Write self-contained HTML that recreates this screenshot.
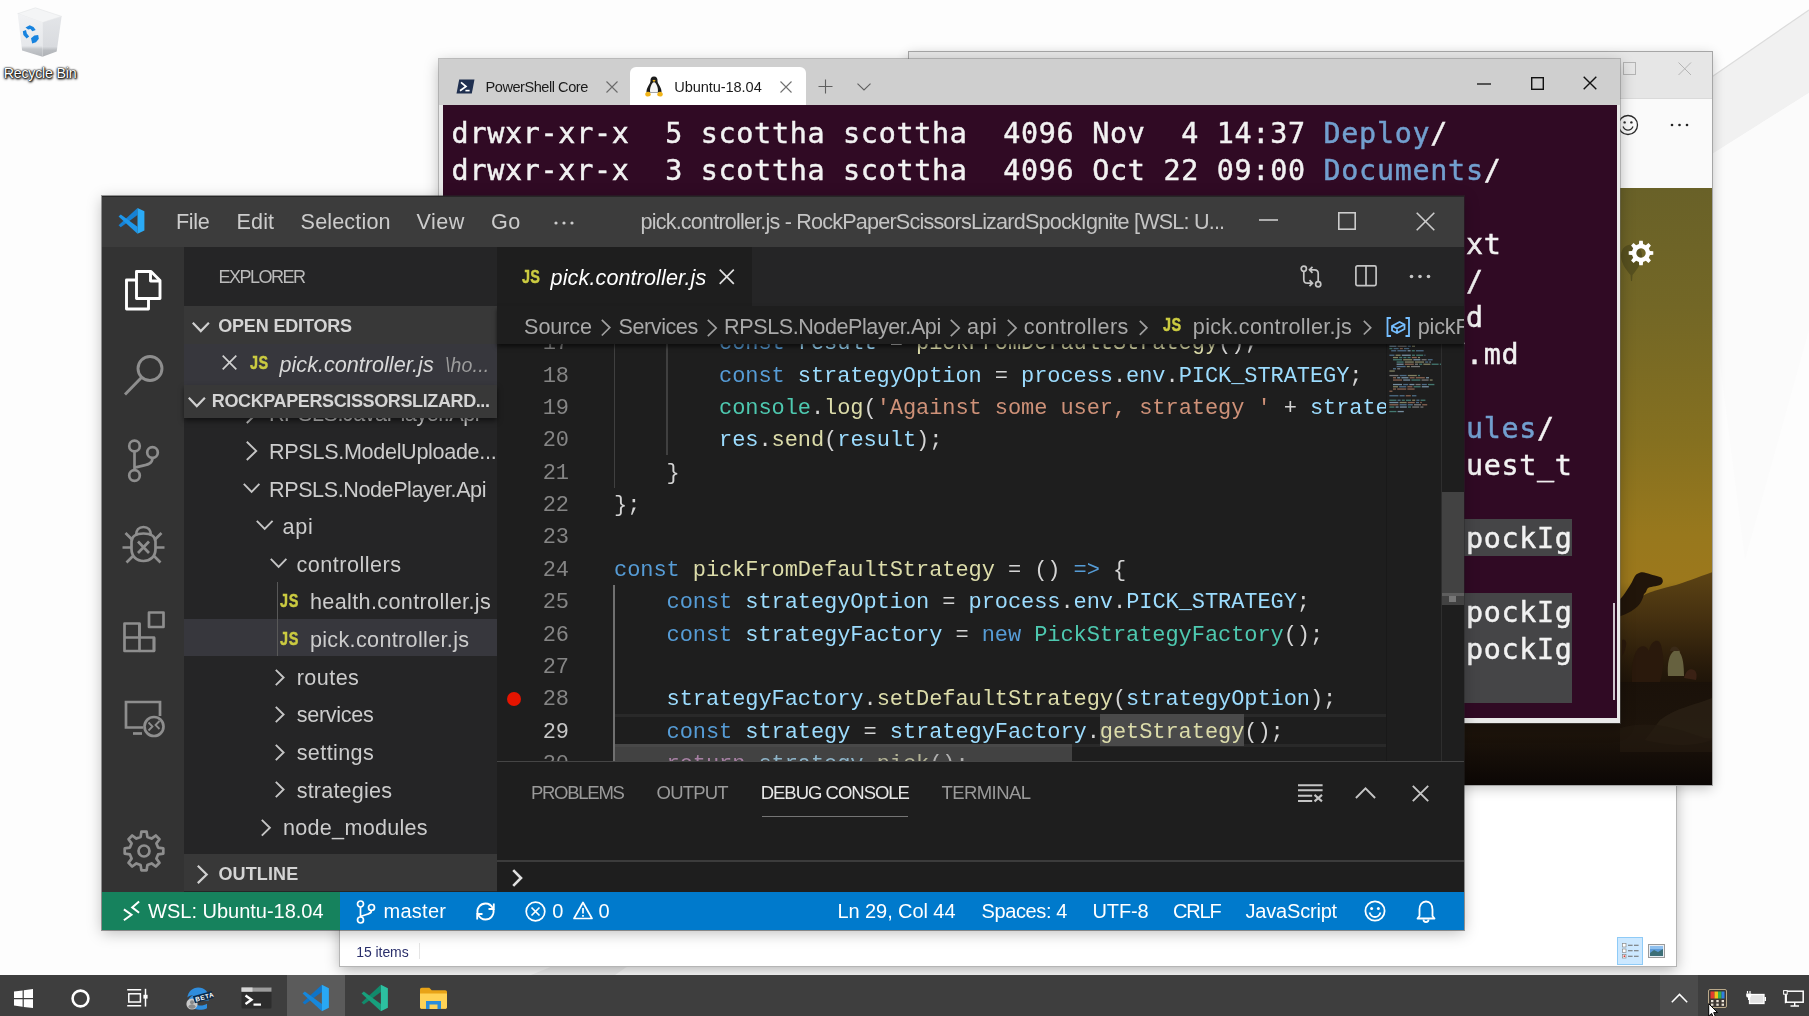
<!DOCTYPE html>
<html lang="en"><head><meta charset="utf-8"><title>Desktop - VS Code WSL</title>
<style>
*{box-sizing:border-box;margin:0;padding:0}
html,body{width:1809px;height:1016px;overflow:hidden;background:#fdfdfd;font-family:"Liberation Sans",sans-serif}
body{position:relative}
.a{position:absolute}
.t{position:absolute;white-space:pre}
svg{position:absolute;overflow:visible}
.win{position:absolute;overflow:hidden;will-change:transform}
.tl{position:absolute;left:9.100000000000023px;white-space:pre;font-family:"DejaVu Sans Mono", "Liberation Mono", monospace;font-size:28.4px;line-height:37px;height:37px;letter-spacing:0.702px;color:#f2f2f2;font-weight:normal;-webkit-text-stroke-width:0.45px}.ln{position:absolute;left:0;width:72px;text-align:right;font-family:"Liberation Mono", monospace;font-size:22px;line-height:32.350px;height:32.350px;color:#858585;letter-spacing:-0.072px}
.ln.cur{color:#c6c6c6}
.cl{position:absolute;left:117px;white-space:pre;font-family:"Liberation Mono", monospace;font-size:22px;line-height:32.350px;height:32.350px;color:#d4d4d4;letter-spacing:-0.072px}
</style></head>
<body>
<svg class="a" style="left:0;top:0" width="1809" height="1016" viewBox="0 0 1809 1016">
<defs><linearGradient id="wg" x1="0" y1="0" x2="1" y2="0"><stop offset="0" stop-color="#f3f3f3"/><stop offset="1" stop-color="#ececec"/></linearGradient></defs>
<polygon points="1700,85 1809,10 1809,93 1700,162" fill="#f1f1f1"/>
<polyline points="1700,85 1809,10" stroke="#dcdcdc" stroke-width="1.2" fill="none"/>
<polygon points="1809,93 1809,330 1745,560 1712,300 1712,154" fill="#fbfbfb"/>
<polygon points="531,975 553,966 628,966 615,975" fill="#f1f1f1"/>
</svg>
<svg class="a" style="left:0;top:0" width="80" height="64" viewBox="0 0 80 64">
<defs><linearGradient id="rbl" x1="0" y1="0" x2="0" y2="1"><stop offset="0" stop-color="#f1f2f4"/><stop offset="0.75" stop-color="#e6e8eb"/><stop offset="0.82" stop-color="#c3c6ca"/><stop offset="1" stop-color="#b4b7bb"/></linearGradient>
<linearGradient id="rbr" x1="0" y1="0" x2="0" y2="1"><stop offset="0" stop-color="#e3e5e8"/><stop offset="0.75" stop-color="#d9dbdf"/><stop offset="0.84" stop-color="#b9bcc0"/><stop offset="1" stop-color="#aeb1b5"/></linearGradient></defs>
<polygon points="17.700,13.700 35.400,7.800 61.600,16.400 42.500,22.600" fill="#f4f5f6" stroke="#e3e4e6" stroke-width="0.600"/>
<polygon points="17.700,13.700 42.500,22.600 42.500,56.700 22.100,50.500" fill="url(#rbl)"/>
<polygon points="42.500,22.600 61.600,16.400 56.700,51.400 42.500,56.700" fill="url(#rbr)"/>
<g fill="#1783df"><path d="M25.500 27.500l4.200-2.200l3.800 1.600l2.200 3.200l-3.400 1.200l-1.800-2.400l-2.400 0.600z"/><path d="M22.800 31.200l3.200-1.200l0.800 3.400l2.400 3.200l-2.600 2l-3.200-3.600z"/><path d="M31 38.200l3.400-2.600l3.800-0.600l0.600 3.800l-2.800 3.400l-3.800 1.200z"/></g>
</svg>
<span class="t" style="left:3.7px;top:64.4px;font-size:14.2px;line-height:18px;color:#fff;letter-spacing:-0.20px;text-shadow:0 0 2px #000,1px 1px 2px #000,0 1px 3px #000,0 0 1px #000;">Recycle Bin</span><div class="win" style="left:340px;top:300px;width:1336px;height:666px;background:#fff;box-shadow:0 0 0 1px #b5b5b5,0 4px 14px rgba(0,0,0,.3)">
<span class="t" style="left:16.3px;top:642.5px;font-size:14px;line-height:18px;color:#2a2f6b;letter-spacing:-0.07px;">15 items</span>
<div class="a" style="left:79px;top:643px;width:1px;height:16px;background:#e5e5e5"></div>
<div class="a" style="left:1277px;top:637px;width:26px;height:28px;background:#cce8ff;border:1px solid #8fcbf7"></div>
<svg style="left:1282px;top:643px" width="18" height="16" viewBox="0 0 18 16"><g fill="#fff" stroke="#8a8a8a" stroke-width="0.7"><rect x="0.5" y="0.5" width="3.5" height="3.5"/><rect x="0.5" y="6" width="3.5" height="3.5"/><rect x="0.5" y="11.5" width="3.5" height="3.5"/></g><rect x="1.6" y="12.4" width="1.6" height="1.6" fill="#d33"/><g stroke="#6b6b6b" stroke-width="1.1"><path d="M6 2.2h4.6M12 2.2h4.6M6 7.7h4.6M12 7.7h4.6M6 13.2h4.6M12 13.2h4.6"/></g></svg>
<svg style="left:1308px;top:644px" width="17" height="14" viewBox="0 0 17 14"><rect x="0.5" y="0.5" width="16" height="13" fill="#e9eef5" stroke="#9a9a9a"/><rect x="2" y="2" width="13" height="10" fill="#5d9bd8"/><path d="M2 9 l4-3 l4 2 l5-3 v7 h-13z" fill="#3d6f77"/><rect x="2" y="2" width="13" height="3" fill="#8fc0ee"/></svg>
</div><div class="win" style="left:909px;top:52px;width:803px;height:733px;background:#fafafa;box-shadow:0 0 0 1px #a6a6a6,0 3px 12px rgba(0,0,0,.24)">
<div class="a" style="left:0;top:0;width:804px;height:47px;background:#e6e6e6;border-bottom:1px solid #dadada"></div>
<svg style="left:714px;top:10px" width="14" height="14" viewBox="0 0 14 14"><rect x="0.5" y="0.5" width="12" height="12" fill="none" stroke="#b4b4b4" stroke-width="1"/></svg>
<svg style="left:769px;top:10px" width="14" height="14" viewBox="0 0 14 14"><path d="M0.5 0.5L13 13M13 0.5L0.5 13" stroke="#b4b4b4" stroke-width="1" fill="none"/></svg>
<svg style="left:707.500px;top:61.500px" width="22" height="22" viewBox="0 0 22 22"><circle cx="11" cy="11" r="9.5" fill="none" stroke="#2b2b2b" stroke-width="1.3"/><circle cx="7.6" cy="8.4" r="1.2" fill="#2b2b2b"/><circle cx="14.4" cy="8.4" r="1.2" fill="#2b2b2b"/><path d="M6 12.6c1.2 2.6 3 3.6 5 3.6s3.8-1 5-3.6" fill="none" stroke="#2b2b2b" stroke-width="1.3"/></svg>
<svg style="left:760.500px;top:69.500px" width="20" height="6" viewBox="0 0 20 6"><circle cx="2" cy="3" r="1.3" fill="#222"/><circle cx="9.5" cy="3" r="1.3" fill="#222"/><circle cx="17" cy="3" r="1.3" fill="#222"/></svg>
<svg style="left:0px;top:136px" width="804" height="597" viewBox="909 188 804 597" preserveAspectRatio="none">
<defs>
<linearGradient id="sky" gradientUnits="userSpaceOnUse" x1="0" y1="188" x2="0" y2="785">
<stop offset="0" stop-color="#696128"/><stop offset="0.2" stop-color="#736726"/><stop offset="0.42" stop-color="#857020"/><stop offset="0.58" stop-color="#98781d"/><stop offset="0.66" stop-color="#9c781c"/><stop offset="0.72" stop-color="#6a4e15"/><stop offset="1" stop-color="#0e0805"/></linearGradient>
<linearGradient id="hill" gradientUnits="userSpaceOnUse" x1="0" y1="572" x2="0" y2="700"><stop offset="0" stop-color="#5c4314"/><stop offset="0.35" stop-color="#463110"/><stop offset="0.7" stop-color="#2a1c0b"/><stop offset="1" stop-color="#150e07"/></linearGradient>
<linearGradient id="gnd" gradientUnits="userSpaceOnUse" x1="0" y1="680" x2="0" y2="785"><stop offset="0" stop-color="#1a1109"/><stop offset="0.5" stop-color="#1d140b"/><stop offset="1" stop-color="#0c0705"/></linearGradient>
</defs>
<rect x="909" y="188" width="804" height="597" fill="url(#sky)"/>
<path d="M1615 612 L1646 594 C1655 590 1668 587 1676 585 S1698 577 1713 572 V700 H1615Z" fill="url(#hill)"/>
<rect x="1400" y="682" width="314" height="103" fill="url(#gnd)"/>
<path d="M1615 618 V603 C1621 600 1626 592 1632 582 C1634 577 1636 574 1638 573.500 C1641 571.500 1644 572 1646 573 C1650 574 1656 576 1660 577 C1663 578 1664 582 1661 584.500 C1658 586.500 1652 586 1648 588 C1646 590 1647 592 1644 594 C1643 598 1641 603 1638 606 C1633 611 1625 615 1615 618Z" fill="#21150a"/>
<path d="M1632 682 C1631 666 1634 650 1640 647 C1644 645 1647 647 1649 651 C1650 644 1654 640 1658 641 C1661 642 1662 648 1663 656 C1664 666 1662 676 1660 682Z" fill="#2a190c"/>
<path d="M1622 640 c3 -2 5 2 4 6 c-1 4 -2 8 -4 10z" fill="#2a190c"/>
<path d="M1668 676 C1667 664 1669 654 1674 651 C1676 648 1680 649 1680 653 C1683 657 1684 666 1684 676Z" fill="#66613f"/>
<path d="M1670 651 a4 4 0 1 1 9 0z" fill="#3a2a18"/>
<path d="M1684 678 c2 -8 6 -10 10 -8 c3 2 3 6 2 10z" fill="#3a2114"/>
<path d="M1660 720 C1675 708 1695 705 1712 698 V740 C1690 748 1665 745 1645 740 Z" fill="#2a2014" opacity="0.8"/>
<path d="M1620 728 C1640 722 1660 724 1680 730 S1705 740 1712 738 V752 H1620Z" fill="#241a10" opacity="0.7"/>
<path d="M1630.500 275 c-5 -6 -10 -13 -9.500 -20 c0.500 -7 5 -10.500 10.500 -10.500 s10 3.500 10.500 10.500 c0.500 7 -4.500 14 -9.500 20 l-0.500 6 h-1z" fill="#57501f"/>
</svg>
<svg style="left:719.3px;top:187.7px" width="26" height="26" viewBox="0 0 26 26"><path fill-rule="evenodd" fill="#fff" d="M10.92 4.04L11.25 0.72L14.75 0.72L15.08 4.04L17.87 5.19L20.45 3.08L22.92 5.55L20.81 8.13L21.96 10.92L25.28 11.25L25.28 14.75L21.96 15.08L20.81 17.87L22.92 20.45L20.45 22.92L17.87 20.81L15.08 21.96L14.75 25.28L11.25 25.28L10.92 21.96L8.13 20.81L5.55 22.92L3.08 20.45L5.19 17.87L4.04 15.08L0.72 14.75L0.72 11.25L4.04 10.92L5.19 8.13L3.08 5.55L5.55 3.08L8.13 5.19Z M13 8.300a4.700 4.700 0 1 0 0.010 0z"/></svg>
</div><div class="win" style="left:439px;top:59px;width:1181px;height:663.5px;background:#cfcfcf;box-shadow:0 0 0 1px rgba(110,110,110,.4),0 4px 14px rgba(0,0,0,.28)">
<div class="a" style="left:0;top:46px;width:1181px;height:617.5px;background:#e9e9e9"></div>
<div class="a" style="left:191px;top:8px;width:176px;height:40px;background:#fff;border-radius:6px 6px 0 0"></div>
<svg style="left:17px;top:20px" width="19" height="15" viewBox="0 0 19 15"><path d="M3.2 0.5H18.5L15.8 14.5H0.5Z" fill="#1f2f4f"/><path d="M5 3.4l5 4.1l-6 4.2" fill="none" stroke="#fff" stroke-width="1.7"/><path d="M9.4 11.6h4.2" stroke="#fff" stroke-width="1.6"/></svg>
<span class="t" style="left:46.5px;top:19.1px;font-size:14.6px;line-height:19px;color:#1b1b1b;letter-spacing:-0.48px;">PowerShell Core</span>
<svg style="left:167px;top:22px" width="12" height="12" viewBox="0 0 12 12"><path d="M0.5 0.5L11.5 11.5M11.5 0.5L0.5 11.5" stroke="#6a6a6a" stroke-width="1.1" fill="none"/></svg>
<svg style="left:205px;top:17px" width="20" height="21" viewBox="0 0 20 21">
<path d="M10 0.6c-2.6 0-3.6 2-3.5 4.2c0.1 1.9-1 3-2.2 5.2c-1.3 2.4-2 4.4-1.8 6.6h15c0.2-2.2-0.5-4.2-1.8-6.6c-1.2-2.2-2.3-3.3-2.2-5.2c0.1-2.2-0.9-4.2-3.5-4.2z" fill="#1c1c1c"/>
<path d="M10 6.2c-1.6 0-2.3 1.8-3 3.6c-0.8 2-1.3 4.2-0.8 6.4h7.6c0.5-2.2 0-4.4-0.8-6.4c-0.7-1.8-1.4-3.6-3-3.6z" fill="#f4f4f4"/>
<path d="M8.3 4.6l1.7-0.8l1.7 0.8l-1.7 1.5z" fill="#f1b418"/>
<path d="M1.2 18.2c0-1.4 1.4-2.6 3-2.4c1.3 0.2 2.6 1.4 2.6 2.8c0 1.2-1.2 1.9-2.8 1.9s-2.8-0.9-2.8-2.3z" fill="#f1b418"/>
<path d="M18.8 18.2c0-1.4-1.4-2.6-3-2.4c-1.3 0.2-2.6 1.4-2.6 2.8c0 1.2 1.2 1.9 2.8 1.9s2.8-0.9 2.8-2.3z" fill="#f1b418"/>
</svg>
<span class="t" style="left:235.2px;top:19.1px;font-size:14.6px;line-height:19px;color:#1b1b1b;letter-spacing:-0.08px;">Ubuntu-18.04</span>
<svg style="left:341px;top:22px" width="12" height="12" viewBox="0 0 12 12"><path d="M0.5 0.5L11.5 11.5M11.5 0.5L0.5 11.5" stroke="#707070" stroke-width="1.1" fill="none"/></svg>
<svg style="left:379px;top:20px" width="15" height="15" viewBox="0 0 15 15"><path d="M7.5 0.5V14.5M0.5 7.5H14.5" stroke="#5f5f5f" stroke-width="1.1" fill="none"/></svg>
<svg style="left:418px;top:24px" width="14" height="8" viewBox="0 0 14 8"><path d="M0.5 0.7L7 7L13.5 0.7" stroke="#5f5f5f" stroke-width="1.1" fill="none"/></svg>
<svg style="left:1038px;top:24px" width="14" height="2" viewBox="0 0 14 2"><path d="M0 1H14" stroke="#111" stroke-width="1.3"/></svg>
<svg style="left:1092px;top:18px" width="13" height="13" viewBox="0 0 13 13"><rect x="0.7" y="0.7" width="11.6" height="11.6" fill="none" stroke="#111" stroke-width="1.4"/></svg>
<svg style="left:1144px;top:17px" width="14" height="14" viewBox="0 0 14 14"><path d="M0.7 0.7L13.3 13.3M13.3 0.7L0.7 13.3" stroke="#111" stroke-width="1.4" fill="none"/></svg>
<div class="a" style="left:3.5px;top:46px;width:1174px;height:612.5px;background:#300a24;overflow:hidden">
<div class="a" style="left:8.5px;top:414.0px;width:1121.4px;height:36.80000000000001px;background:#454547"></div>
<div class="a" style="left:8.5px;top:487.6px;width:1121.4px;height:110.39999999999998px;background:#454547"></div>
<div class="tl" style="top:10.400000000000006px">drwxr-xr-x  5 scottha scottha  4096 Nov  4 14:37 <span style="color:#729fcf">Deploy</span>/</div>
<div class="tl" style="top:47.19999999999999px">drwxr-xr-x  3 scottha scottha  4096 Oct 22 09:00 <span style="color:#729fcf">Documents</span>/</div>
<div class="tl" style="top:84.0px"></div>
<div class="tl" style="top:120.80000000000001px">-rw-r--r--  1 scottha scottha   123 Oct 22 09:00 NOTICE.txt</div>
<div class="tl" style="top:157.60000000000002px">drwxr-xr-x  4 scottha scottha  4096 Oct 22 09:00 <span style="color:#729fcf">Pipeline</span>/</div>
<div class="tl" style="top:194.39999999999998px">-rw-r--r--  1 scottha scottha  8211 Nov  4 14:37 README.md</div>
<div class="tl" style="top:231.2px">-rw-r--r--  1 scottha scottha  2757 Oct 22 09:00 SECURITY.md</div>
<div class="tl" style="top:268.0px">drwxr-xr-x  9 scottha scottha  4096 Nov  4 14:37 <span style="color:#729fcf">Source</span>/</div>
<div class="tl" style="top:304.79999999999995px">drwxr-xr-x 98 scottha scottha  4096 Oct 22 09:01 <span style="color:#729fcf">node_modules</span>/</div>
<div class="tl" style="top:341.6px">-rw-r--r--  1 scottha scottha   412 Oct 22 09:00 pull_request_t</div>
<div class="tl" style="top:378.4px">emplate.md</div>
<div class="tl" style="top:415.19999999999993px">scottha@IGNITE:/mnt/d/github/rps/RockPaperScissorsLizardSpockIg</div>
<div class="tl" style="top:452.0px">nite$ code .</div>
<div class="tl" style="top:488.79999999999995px">scottha@IGNITE:/mnt/d/github/rps/RockPaperScissorsLizardSpockIg</div>
<div class="tl" style="top:525.5999999999999px">scottha@IGNITE:/mnt/d/github/rps/RockPaperScissorsLizardSpockIg</div>
<div class="tl" style="top:562.4px">nite$ </div>
<div class="a" style="left:1170.5px;top:498px;width:1.700px;height:97px;background:#cfc6cd"></div>
</div>
</div><div class="win" style="left:102px;top:196px;width:1361.5px;height:734.3px;background:#1e1e1e;box-shadow:0 0 0 1px rgba(40,40,40,.45),0 3px 14px rgba(0,0,0,.26)">
<div class="a" style="left:0.0px;top:0.0px;width:1361.5px;height:51.0px;background:#3c3c3c;border-top:1.500px solid #262626;"></div>
<svg style="left:15.9px;top:11.3px;" width="27.5" height="27.8" viewBox="0 0 100 100"><path d="M71 3L71 29L10 73L2 66Z" fill="#1681d4"/><path d="M71 97L71 71L10 27L2 34Z" fill="#1e97ea"/><path d="M71 3L96 15V85L71 97Z" fill="#2aaaf6"/></svg>
<span class="t" style="left:73.9px;top:12.4px;font-size:21.6px;line-height:28px;color:#cccccc;letter-spacing:-0.28px;">File</span>
<span class="t" style="left:134.5px;top:12.4px;font-size:21.6px;line-height:28px;color:#cccccc;letter-spacing:0.11px;">Edit</span>
<span class="t" style="left:198.6px;top:12.4px;font-size:21.6px;line-height:28px;color:#cccccc;letter-spacing:0.14px;">Selection</span>
<span class="t" style="left:314.6px;top:12.4px;font-size:21.6px;line-height:28px;color:#cccccc;letter-spacing:0.46px;">View</span>
<span class="t" style="left:388.9px;top:12.4px;font-size:21.6px;line-height:28px;color:#cccccc;letter-spacing:0.47px;">Go</span>
<svg style="left:452.0px;top:24.5px;" width="20" height="4" viewBox="0 0 20 4"><circle cx="2" cy="2" r="1.600" fill="#ccc"/><circle cx="10" cy="2" r="1.600" fill="#ccc"/><circle cx="18" cy="2" r="1.600" fill="#ccc"/></svg>
<span class="t" style="left:538.5px;top:12.4px;font-size:21.6px;line-height:28px;color:#c4c4c4;letter-spacing:-0.81px;">pick.controller.js - RockPaperScissorsLizardSpockIgnite [WSL: U...</span>
<svg style="left:1157.0px;top:22.5px;" width="19" height="2" viewBox="0 0 19 2"><path d="M0 1H19" stroke="#ccc" stroke-width="1.600"/></svg>
<svg style="left:1236.0px;top:16.0px;" width="18" height="18" viewBox="0 0 18 18"><rect x="0.800" y="0.800" width="16.400" height="16.400" fill="none" stroke="#ccc" stroke-width="1.600"/></svg>
<svg style="left:1314.0px;top:15.5px;" width="19" height="19" viewBox="0 0 19 19"><path d="M0.700 0.700L18.300 18.300M18.300 0.700L0.700 18.300" stroke="#ccc" stroke-width="1.600" fill="none"/></svg>
<div class="a" style="left:0.0px;top:51.0px;width:82.0px;height:644.5px;background:#333333;"></div>
<svg style="left:21.0px;top:72.0px;" width="40" height="44" viewBox="0 0 40 44"><g fill="none" stroke="#ffffff" stroke-width="2.900" stroke-linejoin="round"><path d="M13.500 30.500V3.500H28L37 12.500V30.500Z"/><path d="M27.500 3.500V13H37"/><path d="M13 12H3.500V41H25.500V31"/></g></svg>
<svg style="left:21.0px;top:157.0px;" width="42" height="44" viewBox="0 0 42 44"><g fill="none" stroke="#8e8e8e" stroke-width="2.900"><circle cx="27" cy="15.500" r="12"/><path d="M18.500 24.500L2 41.500"/></g></svg>
<svg style="left:23.0px;top:242.0px;" width="36" height="46" viewBox="0 0 36 46"><g fill="none" stroke="#8e8e8e" stroke-width="2.700"><circle cx="9.500" cy="8" r="5.300"/><circle cx="9.500" cy="37.500" r="5.300"/><circle cx="27.500" cy="14.500" r="5.300"/><path d="M9.500 13.500V32"/><path d="M27.500 20C27.500 27 20 27 9.500 29.500"/></g></svg>
<svg style="left:20.0px;top:328.0px;" width="44" height="44" viewBox="0 0 44 44"><g fill="none" stroke="#8e8e8e" stroke-width="2.700"><path d="M9.500 17.500C9.500 12.500 14 9.500 21.500 9.500S33.500 12.500 33.500 17.500V25C33.500 32.500 28.500 37 21.500 37S9.500 32.500 9.500 25Z"/><path d="M14 11.500C14 6 17 3 21.500 3S29 6 29 11.500"/><path d="M16 17.500L27 29M27 17.500L16 29"/><path d="M10 15.500L3.500 9M33 15.500L39.500 9M9 23.500H0.500M34 23.500H42.500M11.500 31.500L4.500 38.500M31.500 31.500L38.500 38.500"/></g></svg>
<svg style="left:20.0px;top:414.0px;" width="44" height="44" viewBox="0 0 44 44"><g fill="none" stroke="#8e8e8e" stroke-width="2.700" stroke-linejoin="round"><path d="M2.500 13.500H17.500V41H2.500Z"/><path d="M2.500 27.500H32V41H17.500"/><path d="M17.500 13.500V27.500M32 27.500V41"/><rect x="27" y="2.500" width="14.500" height="14.500"/></g></svg>
<svg style="left:21.0px;top:503.0px;" width="44" height="40" viewBox="0 0 44 40"><g fill="none" stroke="#8e8e8e" stroke-width="2.700"><path d="M20 28.500H3V3H37V17"/><path d="M10 34.500H19"/><circle cx="31" cy="27.500" r="9.500"/></g><g fill="none" stroke="#8e8e8e" stroke-width="1.800"><path d="M25.500 23.500L29.500 27.500L25.500 31.500"/><path d="M36.500 23.500L32.500 27.500L36.500 31.500" transform="translate(0 -1.500)"/></g></svg>
<svg style="left:20.5px;top:633.5px;" width="42" height="42" viewBox="0 0 42 42"><g fill="none" stroke="#8e8e8e" stroke-width="2.700" stroke-linejoin="round"><path d="M17.6 6.9L18.4 1.7L23.6 1.7L24.4 6.9L28.6 8.6L32.8 5.5L36.5 9.2L33.4 13.4L35.1 17.6L40.3 18.4L40.3 23.6L35.1 24.4L33.4 28.6L36.5 32.8L32.8 36.5L28.6 33.4L24.4 35.1L23.6 40.3L18.4 40.3L17.6 35.1L13.4 33.4L9.2 36.5L5.5 32.8L8.6 28.6L6.9 24.4L1.7 23.6L1.7 18.4L6.9 17.6L8.6 13.4L5.5 9.2L9.2 5.5L13.4 8.6Z"/><circle cx="21" cy="21" r="5.500"/></g></svg>
<div class="a" style="left:82.0px;top:51.0px;width:313.0px;height:644.5px;background:#252526;"></div>
<span class="t" style="left:116.5px;top:70.0px;font-size:18px;line-height:23px;color:#bbbbbb;letter-spacing:-1.51px;">EXPLORER</span>
<span class="t" style="left:167.0px;top:203.6px;font-size:21.6px;line-height:28px;color:#cccccc;letter-spacing:-0.48px;">RPSLS.JavaPlayer.Api</span>
<svg style="left:144.3px;top:207.7px;" width="11.0" height="19.8" viewBox="0 0 11.0 19.8"><path d="M0.800 0.800L10.2 9.9L0.800 19.0" fill="none" stroke="#c5c5c5" stroke-width="1.9"/></svg>
<div class="a" style="left:82.0px;top:422.7px;width:313.0px;height:37.6px;background:#37373d;"></div>
<div class="a" style="left:175.0px;top:385.6px;width:1.4px;height:74.7px;background:#585858;"></div>
<svg style="left:144.3px;top:245.3px;" width="11.0" height="19.8" viewBox="0 0 11.0 19.8"><path d="M0.800 0.800L10.2 9.9L0.800 19.0" fill="none" stroke="#c5c5c5" stroke-width="1.9"/></svg>
<span class="t" style="left:167.0px;top:241.9px;font-size:21.6px;line-height:28px;color:#cccccc;letter-spacing:-0.32px;">RPSLS.ModelUploade...</span>
<svg style="left:140.7px;top:286.5px;" width="17.2" height="9.6" viewBox="0 0 17.2 9.6"><path d="M0.800 0.800L8.6 8.8L16.4 0.800" fill="none" stroke="#c5c5c5" stroke-width="1.9"/></svg>
<span class="t" style="left:167.0px;top:279.5px;font-size:21.6px;line-height:28px;color:#cccccc;letter-spacing:-0.43px;">RPSLS.NodePlayer.Api</span>
<svg style="left:154.0px;top:324.1px;" width="17.4" height="9.7" viewBox="0 0 17.4 9.7"><path d="M0.800 0.800L8.7 8.9L16.6 0.800" fill="none" stroke="#c5c5c5" stroke-width="1.9"/></svg>
<span class="t" style="left:180.6px;top:317.1px;font-size:21.6px;line-height:28px;color:#cccccc;letter-spacing:0.64px;">api</span>
<svg style="left:168.1px;top:361.7px;" width="17.2" height="9.6" viewBox="0 0 17.2 9.6"><path d="M0.800 0.800L8.6 8.8L16.4 0.800" fill="none" stroke="#c5c5c5" stroke-width="1.9"/></svg>
<span class="t" style="left:194.4px;top:354.8px;font-size:21.6px;line-height:28px;color:#cccccc;letter-spacing:0.51px;">controllers</span>
<span class="t" style="left:178.2px;top:393.9px;font-size:18px;line-height:23px;color:#cbcb41;letter-spacing:0.95px;font-weight:bold;transform-origin:0 50%;transform:scaleX(0.8);-webkit-text-stroke:0.450px #cbcb41;">JS</span>
<span class="t" style="left:207.9px;top:392.4px;font-size:21.6px;line-height:28px;color:#cccccc;letter-spacing:0.36px;">health.controller.js</span>
<span class="t" style="left:178.2px;top:431.5px;font-size:18px;line-height:23px;color:#cbcb41;letter-spacing:0.95px;font-weight:bold;transform-origin:0 50%;transform:scaleX(0.8);-webkit-text-stroke:0.450px #cbcb41;">JS</span>
<span class="t" style="left:207.9px;top:430.0px;font-size:21.6px;line-height:28px;color:#cccccc;letter-spacing:0.33px;">pick.controller.js</span>
<svg style="left:172.7px;top:472.5px;" width="9.4" height="16.9" viewBox="0 0 9.4 16.9"><path d="M0.800 0.800L8.6 8.5L0.800 16.1" fill="none" stroke="#c5c5c5" stroke-width="1.9"/></svg>
<span class="t" style="left:194.7px;top:467.6px;font-size:21.6px;line-height:28px;color:#cccccc;letter-spacing:0.44px;">routes</span>
<svg style="left:172.7px;top:510.1px;" width="9.4" height="16.9" viewBox="0 0 9.4 16.9"><path d="M0.800 0.800L8.6 8.5L0.800 16.1" fill="none" stroke="#c5c5c5" stroke-width="1.9"/></svg>
<span class="t" style="left:194.7px;top:505.2px;font-size:21.6px;line-height:28px;color:#cccccc;letter-spacing:-0.29px;">services</span>
<svg style="left:172.7px;top:547.7px;" width="9.4" height="16.9" viewBox="0 0 9.4 16.9"><path d="M0.800 0.800L8.6 8.5L0.800 16.1" fill="none" stroke="#c5c5c5" stroke-width="1.9"/></svg>
<span class="t" style="left:194.7px;top:542.9px;font-size:21.6px;line-height:28px;color:#cccccc;letter-spacing:0.38px;">settings</span>
<svg style="left:172.7px;top:585.3px;" width="9.4" height="16.9" viewBox="0 0 9.4 16.9"><path d="M0.800 0.800L8.6 8.5L0.800 16.1" fill="none" stroke="#c5c5c5" stroke-width="1.9"/></svg>
<span class="t" style="left:194.7px;top:580.5px;font-size:21.6px;line-height:28px;color:#cccccc;letter-spacing:0.18px;">strategies</span>
<svg style="left:158.7px;top:622.7px;" width="9.7" height="17.5" viewBox="0 0 9.7 17.5"><path d="M0.800 0.800L8.9 8.7L0.800 16.7" fill="none" stroke="#c5c5c5" stroke-width="1.9"/></svg>
<span class="t" style="left:181.0px;top:618.1px;font-size:21.6px;line-height:28px;color:#cccccc;letter-spacing:0.27px;">node_modules</span>
<span class="t" style="left:159.2px;top:659.0px;font-size:17px;line-height:22px;color:#cbcb41;letter-spacing:1.24px;font-weight:bold;">{ }</span>
<div class="a" style="left:82.0px;top:110.3px;width:313.0px;height:38.1px;background:#383838;"></div>
<svg style="left:90.0px;top:125.5px;" width="17.7" height="9.9" viewBox="0 0 17.7 9.9"><path d="M0.800 0.800L8.8 9.1L16.9 0.800" fill="none" stroke="#d0d0d0" stroke-width="2.2"/></svg>
<span class="t" style="left:116.2px;top:118.7px;font-size:18px;line-height:23px;color:#d4d4d4;letter-spacing:-0.16px;font-weight:bold;">OPEN EDITORS</span>
<div class="a" style="left:82.0px;top:148.4px;width:313.0px;height:40.6px;background:#37373d;"></div>
<svg style="left:119.7px;top:159.0px;" width="15" height="15" viewBox="0 0 15 15"><path d="M0.700 0.700L14.300 14.300M14.300 0.700L0.700 14.300" stroke="#d0d0d0" stroke-width="1.700" fill="none"/></svg>
<span class="t" style="left:147.5px;top:155.5px;font-size:18px;line-height:23px;color:#cbcb41;letter-spacing:0.76px;font-weight:bold;transform-origin:0 50%;transform:scaleX(0.8);-webkit-text-stroke:0.450px #cbcb41;">JS</span>
<span class="t" style="left:177.5px;top:154.5px;font-size:21.6px;line-height:28px;color:#d8d8d8;letter-spacing:0.01px;font-style:italic;">pick.controller.js</span>
<span class="t" style="left:342.9px;top:156.5px;font-size:19.5px;line-height:25px;color:#9d9d9d;letter-spacing:0.18px;font-style:italic;">\ho...</span>
<div class="a" style="left:82.0px;top:189.0px;width:313.0px;height:33.3px;background:#383838;box-shadow:0 3px 5px rgba(0,0,0,.5);"></div>
<svg style="left:86.4px;top:200.5px;" width="17.7" height="9.9" viewBox="0 0 17.7 9.9"><path d="M0.800 0.800L8.8 9.1L16.9 0.800" fill="none" stroke="#d0d0d0" stroke-width="2.2"/></svg>
<span class="t" style="left:109.8px;top:193.6px;font-size:18px;line-height:23px;color:#d4d4d4;letter-spacing:-0.38px;font-weight:bold;">ROCKPAPERSCISSORSLIZARD...</span>
<div class="a" style="left:82.0px;top:658.3px;width:313.0px;height:37.2px;background:#383838;"></div>
<svg style="left:94.5px;top:669.0px;" width="10.5" height="18.9" viewBox="0 0 10.5 18.9"><path d="M0.800 0.800L9.7 9.5L0.800 18.1" fill="none" stroke="#d0d0d0" stroke-width="2.2"/></svg>
<span class="t" style="left:116.4px;top:667.0px;font-size:18px;line-height:23px;color:#d4d4d4;letter-spacing:0.14px;font-weight:bold;">OUTLINE</span>
<div class="a" style="left:395.0px;top:51.0px;width:966.5px;height:59.0px;background:#252526;"></div>
<div class="a" style="left:395.0px;top:51.0px;width:255.4px;height:59.0px;background:#1e1e1e;"></div>
<span class="t" style="left:420.0px;top:69.8px;font-size:18px;line-height:23px;color:#cbcb41;letter-spacing:0.26px;font-weight:bold;transform-origin:0 50%;transform:scaleX(0.8);-webkit-text-stroke:0.450px #cbcb41;">JS</span>
<span class="t" style="left:448.6px;top:67.6px;font-size:21.6px;line-height:28px;color:#ffffff;letter-spacing:0.10px;font-style:italic;">pick.controller.js</span>
<svg style="left:616.6px;top:72.6px;" width="15.5" height="15.5" viewBox="0 0 15.500 15.500"><path d="M0.700 0.700L14.800 14.800M14.800 0.700L0.700 14.800" stroke="#e0e0e0" stroke-width="1.700" fill="none"/></svg>
<svg style="left:1197.5px;top:69.0px;" width="22" height="23" viewBox="0 0 22 23"><g fill="none" stroke="#c5c5c5" stroke-width="1.700"><circle cx="3.800" cy="3.800" r="2.600"/><circle cx="18.200" cy="19.200" r="2.600"/><path d="M3.800 6.500V14.500C3.800 17 5 18.200 7.500 18.200H12M9.500 15.200L12.500 18.200L9.500 21.200"/><path d="M18.200 16.500V8.500C18.200 6 17 4.800 14.500 4.800H10M12.500 1.800L9.500 4.800L12.500 7.800"/></g></svg>
<svg style="left:1253.2px;top:69.2px;" width="22" height="21.5" viewBox="0 0 22 21.500"><g fill="none" stroke="#c5c5c5" stroke-width="1.700"><rect x="0.900" y="0.900" width="20.200" height="19.700" rx="1.500"/><path d="M11 1V20.500"/></g></svg>
<svg style="left:1307.0px;top:77.5px;" width="22" height="5" viewBox="0 0 22 5"><circle cx="2.500" cy="2.500" r="1.800" fill="#c5c5c5"/><circle cx="11" cy="2.500" r="1.800" fill="#c5c5c5"/><circle cx="19.500" cy="2.500" r="1.800" fill="#c5c5c5"/></svg>
<div class="a" style="left:512.0px;top:518.3px;width:771.6px;height:32.4px;background:transparent;border-top:3px solid #292929;border-bottom:3px solid #292929;"></div>
<div class="a" style="left:997.8px;top:518.3px;width:144.4px;height:31.4px;background:#4a4a4a;"></div>
<div class="a" style="left:511.5px;top:130.1px;width:1.5px;height:161.8px;background:#404040;"></div>
<div class="a" style="left:564.2px;top:130.1px;width:1.5px;height:129.4px;background:#404040;"></div>
<div class="a" style="left:511.3px;top:388.9px;width:2.0px;height:194.1px;background:#707070;"></div>
<div class="a" style="left:395px;top:148.39999999999998px;width:888.5999999999999px;height:416.6px;overflow:hidden">
<div class="ln" style="top:-16.0px">17</div>
<div class="cl" style="top:-16.0px">        <span style="color:#569cd6">const</span><span style="color:#9cdcfe"> result</span> = <span style="color:#dcdcaa">pickFromDefaultStrategy</span>();</div>
<div class="ln" style="top:16.3px">18</div>
<div class="cl" style="top:16.3px">        <span style="color:#569cd6">const</span><span style="color:#9cdcfe"> strategyOption</span> = <span style="color:#9cdcfe">process</span>.<span style="color:#9cdcfe">env</span>.<span style="color:#9cdcfe">PICK_STRATEGY</span>;</div>
<div class="ln" style="top:48.7px">19</div>
<div class="cl" style="top:48.7px">        <span style="color:#4ec9b0">console</span>.<span style="color:#dcdcaa">log</span>(<span style="color:#ce9178">&#x27;Against some user, strategy &#x27;</span> + <span style="color:#9cdcfe">strategyOption</span>);</div>
<div class="ln" style="top:81.0px">20</div>
<div class="cl" style="top:81.0px">        <span style="color:#9cdcfe">res</span>.<span style="color:#dcdcaa">send</span>(<span style="color:#9cdcfe">result</span>);</div>
<div class="ln" style="top:113.4px">21</div>
<div class="cl" style="top:113.4px">    }</div>
<div class="ln" style="top:145.7px">22</div>
<div class="cl" style="top:145.7px">};</div>
<div class="ln" style="top:178.1px">23</div>
<div class="ln" style="top:210.4px">24</div>
<div class="cl" style="top:210.4px"><span style="color:#569cd6">const</span><span style="color:#dcdcaa"> pickFromDefaultStrategy</span> = () <span style="color:#569cd6">=&gt;</span> {</div>
<div class="ln" style="top:242.8px">25</div>
<div class="cl" style="top:242.8px">    <span style="color:#569cd6">const</span><span style="color:#9cdcfe"> strategyOption</span> = <span style="color:#9cdcfe">process</span>.<span style="color:#9cdcfe">env</span>.<span style="color:#9cdcfe">PICK_STRATEGY</span>;</div>
<div class="ln" style="top:275.2px">26</div>
<div class="cl" style="top:275.2px">    <span style="color:#569cd6">const</span><span style="color:#9cdcfe"> strategyFactory</span> = <span style="color:#569cd6">new</span><span style="color:#4ec9b0"> PickStrategyFactory</span>();</div>
<div class="ln" style="top:307.5px">27</div>
<div class="ln" style="top:339.8px">28</div>
<div class="cl" style="top:339.8px">    <span style="color:#9cdcfe">strategyFactory</span>.<span style="color:#dcdcaa">setDefaultStrategy</span>(<span style="color:#9cdcfe">strategyOption</span>);</div>
<div class="ln cur" style="top:372.2px">29</div>
<div class="cl" style="top:372.2px">    <span style="color:#569cd6">const</span><span style="color:#9cdcfe"> strategy</span> = <span style="color:#9cdcfe">strategyFactory</span>.<span style="color:#dcdcaa">getStrategy</span>();</div>
<div class="ln" style="top:404.6px">30</div>
<div class="cl" style="top:404.6px">    <span style="color:#c586c0">return</span><span style="color:#9cdcfe"> strategy</span>.<span style="color:#dcdcaa">pick</span>();</div>
</div>
<div class="a" style="left:404.5px;top:495.5px;width:14.400px;height:14.400px;border-radius:50%;background:#e51400"></div>
<div class="a" style="left:512.7px;top:547.6px;width:457.3px;height:17.4px;background:rgba(121,121,121,0.400);"></div>
<div class="a" style="left:1283.6px;top:148.4px;width:54.9px;height:416.6px;background:#1e1e1e;border-left:1px solid #191919;"></div>
<svg style="left:1283.6px;top:148.4px;" width="55" height="80" viewBox="0 0 55 80"><rect x="3.4" y="1.6" width="7.0" height="1.300" fill="#8aa9bf" opacity="0.800"/><rect x="11.6" y="1.6" width="9.0" height="1.300" fill="#8c8c8c" opacity="0.800"/><rect x="21.8" y="1.6" width="3.0" height="1.300" fill="#5a7fa0" opacity="0.800"/><rect x="26.0" y="1.6" width="3.0" height="1.300" fill="#9a9a74" opacity="0.800"/><rect x="3.4" y="3.9" width="3.0" height="1.300" fill="#4c8f85" opacity="0.800"/><rect x="7.6" y="3.9" width="5.0" height="1.300" fill="#5a7fa0" opacity="0.800"/><rect x="13.8" y="3.9" width="3.0" height="1.300" fill="#a0735e" opacity="0.800"/><rect x="18.0" y="3.9" width="5.2" height="1.300" fill="#5a7fa0" opacity="0.800"/><rect x="5.2" y="6.1" width="5.0" height="1.300" fill="#5a7fa0" opacity="0.800"/><rect x="11.4" y="6.1" width="9.0" height="1.300" fill="#5a7fa0" opacity="0.800"/><rect x="21.6" y="6.1" width="3.0" height="1.300" fill="#8aa9bf" opacity="0.800"/><rect x="25.8" y="6.1" width="3.0" height="1.300" fill="#4c8f85" opacity="0.800"/><rect x="30.0" y="6.1" width="7.6" height="1.300" fill="#5a7fa0" opacity="0.800"/><rect x="3.4" y="10.6" width="5.0" height="1.300" fill="#5a7fa0" opacity="0.800"/><rect x="9.6" y="10.6" width="5.0" height="1.300" fill="#9a9a74" opacity="0.800"/><rect x="15.8" y="10.6" width="9.0" height="1.300" fill="#8aa9bf" opacity="0.800"/><rect x="26.0" y="10.6" width="3.0" height="1.300" fill="#4c8f85" opacity="0.800"/><rect x="30.2" y="10.6" width="7.0" height="1.300" fill="#4c8f85" opacity="0.800"/><rect x="38.4" y="10.6" width="1.0" height="1.300" fill="#5a7fa0" opacity="0.800"/><rect x="7.0" y="12.9" width="5.0" height="1.300" fill="#9a9a74" opacity="0.800"/><rect x="13.2" y="12.9" width="3.0" height="1.300" fill="#4c8f85" opacity="0.800"/><rect x="17.4" y="12.9" width="3.0" height="1.300" fill="#4c8f85" opacity="0.800"/><rect x="21.6" y="12.9" width="3.0" height="1.300" fill="#4c8f85" opacity="0.800"/><rect x="25.8" y="12.9" width="5.0" height="1.300" fill="#a0735e" opacity="0.800"/><rect x="32.0" y="12.9" width="2.0" height="1.300" fill="#9a9a74" opacity="0.800"/><rect x="7.0" y="15.1" width="9.0" height="1.300" fill="#4c8f85" opacity="0.800"/><rect x="17.2" y="15.1" width="9.0" height="1.300" fill="#9a9a74" opacity="0.800"/><rect x="27.4" y="15.1" width="7.0" height="1.300" fill="#8aa9bf" opacity="0.800"/><rect x="35.6" y="15.1" width="5.0" height="1.300" fill="#8c8c8c" opacity="0.800"/><rect x="41.8" y="15.1" width="4.8" height="1.300" fill="#5a7fa0" opacity="0.800"/><rect x="10.6" y="17.4" width="7.0" height="1.300" fill="#4c8f85" opacity="0.800"/><rect x="18.8" y="17.4" width="9.0" height="1.300" fill="#9a9a74" opacity="0.800"/><rect x="29.0" y="17.4" width="9.0" height="1.300" fill="#9a9a74" opacity="0.800"/><rect x="39.2" y="17.4" width="3.0" height="1.300" fill="#5a7fa0" opacity="0.800"/><rect x="43.4" y="17.4" width="1.4" height="1.300" fill="#8aa9bf" opacity="0.800"/><rect x="10.6" y="19.6" width="7.0" height="1.300" fill="#8aa9bf" opacity="0.800"/><rect x="18.8" y="19.6" width="9.0" height="1.300" fill="#a0735e" opacity="0.800"/><rect x="29.0" y="19.6" width="3.0" height="1.300" fill="#8c8c8c" opacity="0.800"/><rect x="33.2" y="19.6" width="3.0" height="1.300" fill="#4c8f85" opacity="0.800"/><rect x="37.4" y="19.6" width="7.0" height="1.300" fill="#9a9a74" opacity="0.800"/><rect x="45.6" y="19.6" width="7.0" height="1.300" fill="#4c8f85" opacity="0.800"/><rect x="53.8" y="19.6" width="1.8" height="1.300" fill="#4c8f85" opacity="0.800"/><rect x="10.6" y="21.9" width="9.0" height="1.300" fill="#5a7fa0" opacity="0.800"/><rect x="20.8" y="21.9" width="3.0" height="1.300" fill="#9a9a74" opacity="0.800"/><rect x="25.0" y="21.9" width="9.0" height="1.300" fill="#8c8c8c" opacity="0.800"/><rect x="7.0" y="24.1" width="3.0" height="1.300" fill="#5a7fa0" opacity="0.800"/><rect x="11.2" y="24.1" width="3.0" height="1.300" fill="#8c8c8c" opacity="0.800"/><rect x="3.4" y="26.4" width="5.4" height="1.300" fill="#9a9a74" opacity="0.800"/><rect x="3.4" y="30.9" width="9.0" height="1.300" fill="#8c8c8c" opacity="0.800"/><rect x="13.6" y="30.9" width="7.0" height="1.300" fill="#5a7fa0" opacity="0.800"/><rect x="21.8" y="30.9" width="9.0" height="1.300" fill="#9a9a74" opacity="0.800"/><rect x="32.0" y="30.9" width="2.0" height="1.300" fill="#4c8f85" opacity="0.800"/><rect x="7.0" y="33.1" width="3.0" height="1.300" fill="#a0735e" opacity="0.800"/><rect x="11.2" y="33.1" width="3.0" height="1.300" fill="#8aa9bf" opacity="0.800"/><rect x="15.4" y="33.1" width="7.0" height="1.300" fill="#8aa9bf" opacity="0.800"/><rect x="23.6" y="33.1" width="5.0" height="1.300" fill="#a0735e" opacity="0.800"/><rect x="29.8" y="33.1" width="9.0" height="1.300" fill="#a0735e" opacity="0.800"/><rect x="40.0" y="33.1" width="3.0" height="1.300" fill="#8aa9bf" opacity="0.800"/><rect x="7.0" y="35.4" width="9.0" height="1.300" fill="#a0735e" opacity="0.800"/><rect x="17.2" y="35.4" width="7.0" height="1.300" fill="#8aa9bf" opacity="0.800"/><rect x="25.4" y="35.4" width="9.0" height="1.300" fill="#4c8f85" opacity="0.800"/><rect x="35.6" y="35.4" width="7.0" height="1.300" fill="#8c8c8c" opacity="0.800"/><rect x="43.8" y="35.4" width="2.8" height="1.300" fill="#9a9a74" opacity="0.800"/><rect x="7.0" y="39.9" width="9.0" height="1.300" fill="#8aa9bf" opacity="0.800"/><rect x="17.2" y="39.9" width="5.0" height="1.300" fill="#5a7fa0" opacity="0.800"/><rect x="23.4" y="39.9" width="5.0" height="1.300" fill="#8aa9bf" opacity="0.800"/><rect x="29.6" y="39.9" width="5.0" height="1.300" fill="#8c8c8c" opacity="0.800"/><rect x="35.8" y="39.9" width="5.0" height="1.300" fill="#5a7fa0" opacity="0.800"/><rect x="42.0" y="39.9" width="6.4" height="1.300" fill="#4c8f85" opacity="0.800"/><rect x="7.0" y="42.1" width="5.0" height="1.300" fill="#9a9a74" opacity="0.800"/><rect x="13.2" y="42.1" width="7.0" height="1.300" fill="#5a7fa0" opacity="0.800"/><rect x="21.4" y="42.1" width="5.0" height="1.300" fill="#a0735e" opacity="0.800"/><rect x="27.6" y="42.1" width="7.0" height="1.300" fill="#4c8f85" opacity="0.800"/><rect x="35.8" y="42.1" width="7.0" height="1.300" fill="#8aa9bf" opacity="0.800"/><rect x="7.0" y="44.4" width="3.0" height="1.300" fill="#a0735e" opacity="0.800"/><rect x="11.2" y="44.4" width="9.0" height="1.300" fill="#a0735e" opacity="0.800"/><rect x="21.4" y="44.4" width="7.2" height="1.300" fill="#a0735e" opacity="0.800"/><rect x="3.4" y="46.6" width="3.0" height="1.300" fill="#a0735e" opacity="0.800"/><rect x="3.4" y="51.1" width="9.0" height="1.300" fill="#5a7fa0" opacity="0.800"/><rect x="13.6" y="51.1" width="5.0" height="1.300" fill="#5a7fa0" opacity="0.800"/><rect x="19.8" y="51.1" width="5.0" height="1.300" fill="#a0735e" opacity="0.800"/><rect x="26.0" y="51.1" width="4.4" height="1.300" fill="#5a7fa0" opacity="0.800"/><rect x="3.4" y="55.6" width="7.0" height="1.300" fill="#4c8f85" opacity="0.800"/><rect x="11.6" y="55.6" width="3.0" height="1.300" fill="#5a7fa0" opacity="0.800"/><rect x="15.8" y="55.6" width="3.0" height="1.300" fill="#4c8f85" opacity="0.800"/><rect x="20.0" y="55.6" width="5.0" height="1.300" fill="#4c8f85" opacity="0.800"/><rect x="26.2" y="55.6" width="3.0" height="1.300" fill="#9a9a74" opacity="0.800"/><rect x="30.4" y="55.6" width="3.0" height="1.300" fill="#5a7fa0" opacity="0.800"/><rect x="34.6" y="55.6" width="4.8" height="1.300" fill="#4c8f85" opacity="0.800"/><rect x="3.4" y="57.9" width="9.0" height="1.300" fill="#8aa9bf" opacity="0.800"/><rect x="13.6" y="57.9" width="7.0" height="1.300" fill="#9a9a74" opacity="0.800"/><rect x="21.8" y="57.9" width="7.0" height="1.300" fill="#a0735e" opacity="0.800"/><rect x="30.0" y="57.9" width="3.0" height="1.300" fill="#5a7fa0" opacity="0.800"/><rect x="34.2" y="57.9" width="1.6" height="1.300" fill="#a0735e" opacity="0.800"/><rect x="3.4" y="60.1" width="9.0" height="1.300" fill="#a0735e" opacity="0.800"/><rect x="13.6" y="60.1" width="7.0" height="1.300" fill="#5a7fa0" opacity="0.800"/><rect x="21.8" y="60.1" width="5.0" height="1.300" fill="#5a7fa0" opacity="0.800"/><rect x="28.0" y="60.1" width="7.0" height="1.300" fill="#8c8c8c" opacity="0.800"/><rect x="36.2" y="60.1" width="5.0" height="1.300" fill="#a0735e" opacity="0.800"/><rect x="3.4" y="62.4" width="5.0" height="1.300" fill="#4c8f85" opacity="0.800"/><rect x="9.6" y="62.4" width="3.0" height="1.300" fill="#8aa9bf" opacity="0.800"/><rect x="13.8" y="62.4" width="7.0" height="1.300" fill="#8aa9bf" opacity="0.800"/><rect x="22.0" y="62.4" width="3.0" height="1.300" fill="#4c8f85" opacity="0.800"/><rect x="26.2" y="62.4" width="7.0" height="1.300" fill="#8c8c8c" opacity="0.800"/><rect x="34.4" y="62.4" width="3.0" height="1.300" fill="#8c8c8c" opacity="0.800"/><rect x="3.4" y="66.9" width="7.0" height="1.300" fill="#4c8f85" opacity="0.800"/><rect x="11.6" y="66.9" width="6.2" height="1.300" fill="#8aa9bf" opacity="0.800"/></svg>
<div class="a" style="left:1338.5px;top:148.4px;width:23.0px;height:416.6px;background:#1e1e1e;border-left:1px solid #2e2e2e;"></div>
<div class="a" style="left:1339.5px;top:296.0px;width:22.0px;height:112.7px;background:#424242;"></div>
<div class="a" style="left:1339.5px;top:397.0px;width:22.0px;height:3.0px;background:#5e5e5e;"></div>
<div class="a" style="left:1347.0px;top:400.0px;width:7.0px;height:5.5px;background:#777;"></div>
<div class="a" style="left:395.0px;top:110.0px;width:966.5px;height:38.4px;background:#1e1e1e;box-shadow:0 3px 4px rgba(0,0,0,.55);"></div>
<span class="t" style="left:422.1px;top:116.5px;font-size:21.6px;line-height:28px;color:#a9a9a9;letter-spacing:-0.09px;">Source</span>
<span class="t" style="left:516.6px;top:116.5px;font-size:21.6px;line-height:28px;color:#a9a9a9;letter-spacing:-0.46px;">Services</span>
<span class="t" style="left:622.1px;top:116.5px;font-size:21.6px;line-height:28px;color:#a9a9a9;letter-spacing:-0.45px;">RPSLS.NodePlayer.Api</span>
<span class="t" style="left:864.9px;top:116.5px;font-size:21.6px;line-height:28px;color:#a9a9a9;letter-spacing:0.51px;">api</span>
<span class="t" style="left:921.8px;top:116.5px;font-size:21.6px;line-height:28px;color:#a9a9a9;letter-spacing:0.50px;">controllers</span>
<span class="t" style="left:1090.8px;top:116.5px;font-size:21.6px;line-height:28px;color:#a9a9a9;letter-spacing:0.32px;">pick.controller.js</span>
<span class="t" style="left:1315.8px;top:116.5px;font-size:21.6px;line-height:28px;color:#a9a9a9;letter-spacing:-0.19px;">pickFromDefaultStrategy</span>
<svg style="left:498.8px;top:122.9px;" width="9.6" height="17.3" viewBox="0 0 9.6 17.3"><path d="M0.800 0.800L8.8 8.6L0.800 16.5" fill="none" stroke="#a0a0a0" stroke-width="1.7"/></svg>
<svg style="left:604.6px;top:122.5px;" width="10.0" height="18.0" viewBox="0 0 10.0 18.0"><path d="M0.800 0.800L9.2 9.0L0.800 17.2" fill="none" stroke="#a0a0a0" stroke-width="1.7"/></svg>
<svg style="left:847.7px;top:122.5px;" width="10.0" height="18.0" viewBox="0 0 10.0 18.0"><path d="M0.800 0.800L9.2 9.0L0.800 17.2" fill="none" stroke="#a0a0a0" stroke-width="1.7"/></svg>
<svg style="left:904.8px;top:122.6px;" width="9.9" height="17.8" viewBox="0 0 9.9 17.8"><path d="M0.800 0.800L9.1 8.9L0.800 17.0" fill="none" stroke="#a0a0a0" stroke-width="1.7"/></svg>
<svg style="left:1037.0px;top:123.7px;" width="8.7" height="15.7" viewBox="0 0 8.7 15.7"><path d="M0.800 0.800L7.9 7.8L0.800 14.9" fill="none" stroke="#a0a0a0" stroke-width="1.7"/></svg>
<svg style="left:1260.6px;top:123.9px;" width="8.5" height="15.3" viewBox="0 0 8.5 15.3"><path d="M0.800 0.800L7.7 7.7L0.800 14.5" fill="none" stroke="#a0a0a0" stroke-width="1.7"/></svg>
<span class="t" style="left:1060.7px;top:118.0px;font-size:18px;line-height:23px;color:#cbcb41;letter-spacing:0.51px;font-weight:bold;transform-origin:0 50%;transform:scaleX(0.8);-webkit-text-stroke:0.450px #cbcb41;">JS</span>
<svg style="left:1283.7px;top:120.0px;" width="24.5" height="22" viewBox="0 0 24.500 22"><g fill="none" stroke="#75beff" stroke-width="1.800"><path d="M5 2H1.500V20H5M19.500 2H23V20H19.500"/><path d="M6 10L13.500 6L18.500 8.500V13L11 17L6 14.500ZM6 10L11 12.500L18.500 8.500M11 12.500V17"/></g></svg>
<div class="a" style="left:395.0px;top:565.0px;width:966.5px;height:130.5px;background:#1e1e1e;border-top:1.500px solid #454545;"></div>
<span class="t" style="left:428.9px;top:585.0px;font-size:18.5px;line-height:24px;color:#9a9a9a;letter-spacing:-1.25px;">PROBLEMS</span>
<span class="t" style="left:554.6px;top:585.0px;font-size:18.5px;line-height:24px;color:#9a9a9a;letter-spacing:-0.82px;">OUTPUT</span>
<span class="t" style="left:658.7px;top:585.0px;font-size:18.5px;line-height:24px;color:#e7e7e7;letter-spacing:-1.01px;">DEBUG CONSOLE</span>
<span class="t" style="left:839.6px;top:585.0px;font-size:18.5px;line-height:24px;color:#9a9a9a;letter-spacing:-0.60px;">TERMINAL</span>
<div class="a" style="left:659.5px;top:619.5px;width:146.9px;height:1.7px;background:#757575;"></div>
<svg style="left:1196.4px;top:587.0px;" width="25" height="20" viewBox="0 0 25 20"><g fill="none" stroke="#c5c5c5" stroke-width="1.900"><path d="M0 2.200H24.600M0 7.300H24.600M0 12.700H14.200M0 18H14.200"/><path d="M16.500 11.900L24 18.400M24 11.900L16.500 18.400" stroke-width="2.100"/></g></svg>
<svg style="left:1253.0px;top:590.5px;" width="21" height="12" viewBox="0 0 21 12"><path d="M0.900 11L10.500 1.400L20.100 11" fill="none" stroke="#c5c5c5" stroke-width="1.900"/></svg>
<svg style="left:1309.5px;top:589.0px;" width="17" height="17" viewBox="0 0 17 17"><path d="M0.800 0.800L16.200 16.200M16.200 0.800L0.800 16.200" fill="none" stroke="#c5c5c5" stroke-width="1.900"/></svg>
<div class="a" style="left:395.0px;top:664.0px;width:966.5px;height:1.5px;background:#3c3c3c;"></div>
<svg style="left:409.5px;top:673.0px;" width="11" height="18" viewBox="0 0 11 18"><path d="M1.200 1.200L9 9L1.200 16.800" fill="none" stroke="#e0e0e0" stroke-width="2.600"/></svg>
<div class="a" style="left:0.0px;top:695.5px;width:1361.5px;height:38.8px;background:#007acc;"></div>
<div class="a" style="left:0.0px;top:695.5px;width:238.3px;height:38.8px;background:#16825d;"></div>
<svg style="left:21.0px;top:703.5px;" width="17" height="22" viewBox="0 0 17 22"><g fill="none" stroke="#ffffff" stroke-width="2"><path d="M0.900 9.400L8.500 14.700L0.900 20.300"/><path d="M16.100 1.400L9.200 7.400L16.100 12.700"/></g></svg>
<span class="t" style="left:46.1px;top:701.6px;font-size:20px;line-height:26px;color:#ffffff;letter-spacing:-0.01px;">WSL: Ubuntu-18.04</span>
<svg style="left:254.0px;top:703.5px;" width="20" height="24" viewBox="0 0 20 24"><g fill="none" stroke="#ffffff" stroke-width="1.700"><circle cx="4.500" cy="4" r="3"/><circle cx="4.500" cy="20" r="3"/><circle cx="15.500" cy="7.500" r="3"/><path d="M4.500 7V17M15.500 10.500C15.500 14.500 10 14 4.500 16.500"/></g></svg>
<span class="t" style="left:281.5px;top:701.6px;font-size:20px;line-height:26px;color:#ffffff;letter-spacing:0.28px;">master</span>
<svg style="left:371.5px;top:704.5px;" width="23" height="21" viewBox="0 0 23 21"><g fill="none" stroke="#ffffff" stroke-width="1.800"><path d="M3.500 12.500C2.500 7 6.500 2.500 11.500 2.500C15 2.500 17.500 4.500 19 7.500"/><path d="M19.500 8.500C20.500 14 16.500 18.500 11.500 18.500C8 18.500 5.500 16.500 4 13.500"/><path d="M19.800 2.500V8H14.500M3.200 18.500V13H8.500"/></g></svg>
<svg style="left:423.0px;top:704.5px;" width="21" height="21" viewBox="0 0 21 21"><g fill="none" stroke="#ffffff" stroke-width="1.700"><circle cx="10.500" cy="10.500" r="9.300"/><path d="M6.500 6.500L14.500 14.500M14.500 6.500L6.500 14.500"/></g></svg>
<span class="t" style="left:450.2px;top:701.6px;font-size:20px;line-height:26px;color:#ffffff;letter-spacing:1.47px;">0</span>
<svg style="left:471.0px;top:705.0px;" width="20" height="19" viewBox="0 0 20 19"><g fill="none" stroke="#ffffff" stroke-width="1.700" stroke-linejoin="round"><path d="M10 1.500L19 17.500H1Z"/><path d="M10 7V12.500M10 14V15.800"/></g></svg>
<span class="t" style="left:496.5px;top:701.6px;font-size:20px;line-height:26px;color:#ffffff;letter-spacing:1.38px;">0</span>
<span class="t" style="left:735.5px;top:701.6px;font-size:20px;line-height:26px;color:#ffffff;letter-spacing:-0.08px;">Ln 29, Col 44</span>
<span class="t" style="left:879.5px;top:701.6px;font-size:20px;line-height:26px;color:#ffffff;letter-spacing:-0.38px;">Spaces: 4</span>
<span class="t" style="left:990.5px;top:701.6px;font-size:20px;line-height:26px;color:#ffffff;letter-spacing:-0.13px;">UTF-8</span>
<span class="t" style="left:1071.0px;top:701.6px;font-size:20px;line-height:26px;color:#ffffff;letter-spacing:-1.18px;">CRLF</span>
<span class="t" style="left:1143.5px;top:701.6px;font-size:20px;line-height:26px;color:#ffffff;letter-spacing:-0.19px;">JavaScript</span>
<svg style="left:1262.0px;top:704.0px;" width="22" height="22" viewBox="0 0 22 22"><circle cx="11" cy="11" r="9.600" fill="none" stroke="#ffffff" stroke-width="1.800"/><circle cx="7.600" cy="8.500" r="1.500" fill="#ffffff"/><circle cx="14.400" cy="8.500" r="1.500" fill="#ffffff"/><path d="M5.500 12.500C6.500 15.500 8.500 17 11 17S15.500 15.500 16.500 12.500" fill="none" stroke="#ffffff" stroke-width="1.800"/></svg>
<svg style="left:1314.0px;top:703.5px;" width="20" height="23" viewBox="0 0 20 23"><g fill="none" stroke="#ffffff" stroke-width="1.800" stroke-linejoin="round"><path d="M3.500 16V9.500C3.500 5 6 1.500 10 1.500S16.500 5 16.500 9.500V16L18.500 18.500H1.500Z"/><path d="M7.500 19.500C7.500 21 8.500 22 10 22S12.500 21 12.500 19.500"/></g></svg>
</div><div class="a" style="left:0;top:974.5px;width:1809px;height:42px;background:#3e3e3e"></div>
<div class="a" style="left:287px;top:974.5px;width:58px;height:42px;background:#5b5b5b"></div>
<div class="a" style="left:1660px;top:974.5px;width:38px;height:42px;background:#4b4b4b"></div>
<svg style="left:14px;top:989px" width="19" height="19" viewBox="0 0 19 19"><g fill="#fff"><polygon points="0,2.6 8.6,1.4 8.6,9 0,9"/><polygon points="9.8,1.2 19,0 19,9 9.8,9"/><polygon points="0,10.2 8.6,10.2 8.6,17.8 0,16.6"/><polygon points="9.8,10.2 19,10.2 19,19 9.8,17.9"/></g></svg>
<svg style="left:71px;top:989px" width="19" height="19" viewBox="0 0 19 19"><circle cx="9.5" cy="9.5" r="7.9" fill="none" stroke="#fff" stroke-width="2.6"/></svg>
<svg style="left:127px;top:988px" width="22" height="19" viewBox="0 0 22 19"><g fill="none" stroke="#fff" stroke-width="1.500"><rect x="1.800" y="5.800" width="11.600" height="8.200"/><path d="M0.200 1.800h14M0.200 17.800h14"/><path d="M18.500 0.800v17.800"/></g><rect x="16.400" y="6.800" width="4.200" height="3.800" fill="#fff"/></svg>
<svg style="left:184px;top:984px" width="29" height="27" viewBox="0 0 29 27">
<path d="M3.4 13.6c0.6-6 5.2-10.2 10.8-10.2c6.4 0 10.6 4.4 10.6 10.6v2.6H10.2c0.4 3.4 3 5 6.2 5c2.6 0 4.8-0.8 6.6-1.8v4.4c-2 1-4.6 1.6-7.4 1.6c-6.6 0-11-3.8-11.2-9.8c1.2-2.8 3.6-4.8 6.4-5.8c0.6-2.2 2-3.4 3.8-3.4c2.2 0 3.4 1.6 3.6 4h-8c-3 0.6-5.400 1.4-6.8 2.800z" fill="#2f8ddd"/>
<circle cx="8" cy="20" r="5.6" fill="#c9c9c9"/><circle cx="8" cy="18.2" r="2" fill="#8b8b8b"/><path d="M4.200 23c0.600-2 2-2.800 3.800-2.800s3.200 0.800 3.800 2.800c-1 1.200-2.400 1.800-3.800 1.800s-2.800-0.600-3.800-1.800z" fill="#8b8b8b"/>
<g transform="rotate(-16 19 13)"><rect x="9.5" y="9.500" width="19.500" height="7.400" fill="#0b2a4a"/><text x="11" y="15.600" font-family="Liberation Sans, sans-serif" font-weight="bold" font-size="6.400" fill="#fff" letter-spacing="0.600">BETA</text></g>
</svg>
<svg style="left:241px;top:987px" width="31" height="22" viewBox="0 0 31 22"><rect x="0.5" y="0.5" width="30" height="21" rx="1.5" fill="#2d2d2d"/><rect x="0.5" y="0.5" width="30" height="4.200" fill="#9b9b9b"/><rect x="0.5" y="0.5" width="11" height="4.200" fill="#d6d6d6"/><path d="M4.500 8.500l6 4.300l-6 4.300" fill="none" stroke="#fff" stroke-width="2.400"/><path d="M12.500 17.600h7.500" stroke="#fff" stroke-width="2.200"/></svg>
<svg style="left:301px;top:984px" width="30" height="28" viewBox="0 0 100 100"><path d="M71 3L71 29L10 73L2 66Z" fill="#0f74c8"/><path d="M71 97L71 71L10 27L2 34Z" fill="#1688dc"/><path d="M71 3L96 15V85L71 97Z" fill="#29a8f4"/></svg>
<svg style="left:360px;top:984px" width="30" height="28" viewBox="0 0 100 100"><path d="M71 3L71 29L10 73L2 66Z" fill="#128a6b"/><path d="M71 97L71 71L10 27L2 34Z" fill="#17a07d"/><path d="M71 3L96 15V85L71 97Z" fill="#2cc0a0"/></svg>
<svg style="left:419px;top:986px" width="29" height="24" viewBox="0 0 29 24"><path d="M1 3.500c0-1 0.800-1.800 1.800-1.800h7.500l2.400 2.600h13.500c1 0 1.800 0.800 1.800 1.800V21c0 1-0.800 1.800-1.800 1.800H2.800c-1 0-1.800-0.800-1.800-1.800z" fill="#e8a317"/><path d="M1 7.500h27V21c0 1-0.800 1.800-1.800 1.800H2.800c-1 0-1.800-0.800-1.800-1.800z" fill="#ffd255"/><rect x="7" y="15" width="15" height="8" fill="#2b8ddb"/><rect x="10.500" y="18.500" width="8" height="4.500" fill="#ffd255"/></svg>
<svg style="left:1671px;top:993px" width="17" height="10" viewBox="0 0 17 10"><path d="M0.800 9.200L8.500 1.400L16.200 9.200" fill="none" stroke="#fff" stroke-width="1.500"/></svg>
<svg style="left:1708px;top:989px" width="19" height="19" viewBox="0 0 19 19"><rect x="0.500" y="0.500" width="18" height="18" rx="1.500" fill="#3d3834" stroke="#b9a98a" stroke-width="1"/><rect x="2.500" y="2.500" width="4" height="7" fill="#e23b2e"/><rect x="6.500" y="2.500" width="3.500" height="7" fill="#f2c21a"/><rect x="10" y="2.500" width="3.500" height="7" fill="#36b24a"/><rect x="13.500" y="2.500" width="3" height="7" fill="#2f7fe0"/><g fill="#e8e2d6"><rect x="3" y="11" width="2.400" height="2.200"/><rect x="8.300" y="11" width="2.400" height="2.200"/><rect x="13.600" y="11" width="2.400" height="2.200"/><rect x="3" y="14.600" width="2.400" height="2.200"/><rect x="8.300" y="14.600" width="2.400" height="2.200"/><rect x="13.600" y="14.600" width="2.400" height="2.200"/></g></svg>
<svg style="left:1745px;top:991px" width="21" height="14" viewBox="0 0 21 14"><rect x="4.500" y="3.500" width="14.500" height="9" fill="#e2e2e2" stroke="#fff" stroke-width="1.300"/><rect x="19.500" y="6" width="1.500" height="4" fill="#fff"/><path d="M2.500 0v2.500M5 0v2.500" stroke="#fff" stroke-width="1.200"/><path d="M1.200 2.500h5v2.200c0 1.200-1 2-2.500 2s-2.500-0.800-2.500-2z" fill="#fff"/><rect x="3" y="6" width="1.400" height="3" fill="#fff"/></svg>
<svg style="left:1783px;top:990px" width="21" height="17" viewBox="0 0 21 17"><rect x="3.200" y="1.200" width="17" height="11" fill="none" stroke="#fff" stroke-width="1.500"/><path d="M11.700 12.500v3M7.500 16h8.500" stroke="#fff" stroke-width="1.400"/><rect x="0.600" y="0.600" width="3.600" height="3.600" fill="#3a3a3a" stroke="#fff" stroke-width="1"/><path d="M2.400 4.200v9" stroke="#fff" stroke-width="1.200"/></svg>
<svg style="left:1708px;top:1003px" width="12" height="16" viewBox="0 0 12 16"><path d="M0.700 0.700V13L3.600 10.400L5.700 15.200L7.800 14.300L5.700 9.600H9.600Z" fill="#fff" stroke="#000" stroke-width="1"/></svg>
</body></html>
